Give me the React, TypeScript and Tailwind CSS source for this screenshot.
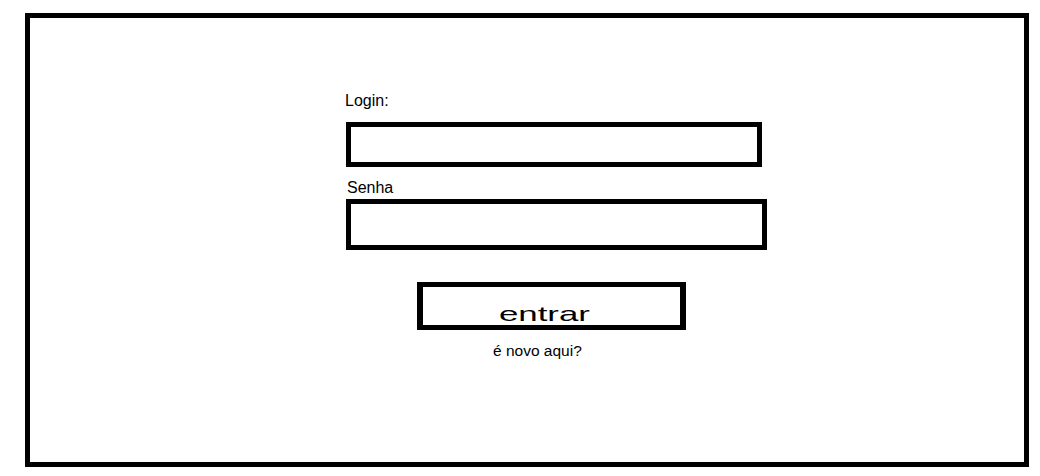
export default function App() {
  return (
    <div className="min-h-[476px] w-[1040px] bg-white pl-[25px] pt-[13px] font-['Liberation_Sans',Arial,sans-serif] text-black">
      <div className="h-[454px] w-[1004px] border-[5px] border-black">
        <form
          className="flex flex-col items-start pl-[316px] pt-[74px]"
          onSubmit={(e) => e.preventDefault()}
        >
          <label htmlFor="login" className="ml-[-1px] text-[16px] leading-[18px]">
            Login:
          </label>
          <input
            id="login"
            type="text"
            className="mt-[12px] block h-[45px] w-[416px] border-[5px] border-black bg-white outline-none"
          />
          <label
            htmlFor="senha"
            className="ml-[1px] mt-[12px] text-[16px] leading-[18px]"
          >
            Senha
          </label>
          <input
            id="senha"
            type="password"
            className="mt-[2px] block h-[51px] w-[421px] border-[5px] border-black bg-white outline-none"
          />
          <button
            type="submit"
            className="ml-[71px] mt-[32px] flex h-[48px] w-[269px] items-end justify-center border-x-[6px] border-y-[5px] border-black bg-white pb-[1px] pr-[14px]"
          >
            <span className="inline-block origin-center scale-x-[1.66] text-[21px] leading-[21px]">
              entrar
            </span>
          </button>
          <a
            href="#"
            className="ml-[147px] mt-[12px] text-[15.5px] leading-[18px] text-black no-underline"
          >
            é novo aqui?
          </a>
        </form>
      </div>
    </div>
  );
}
